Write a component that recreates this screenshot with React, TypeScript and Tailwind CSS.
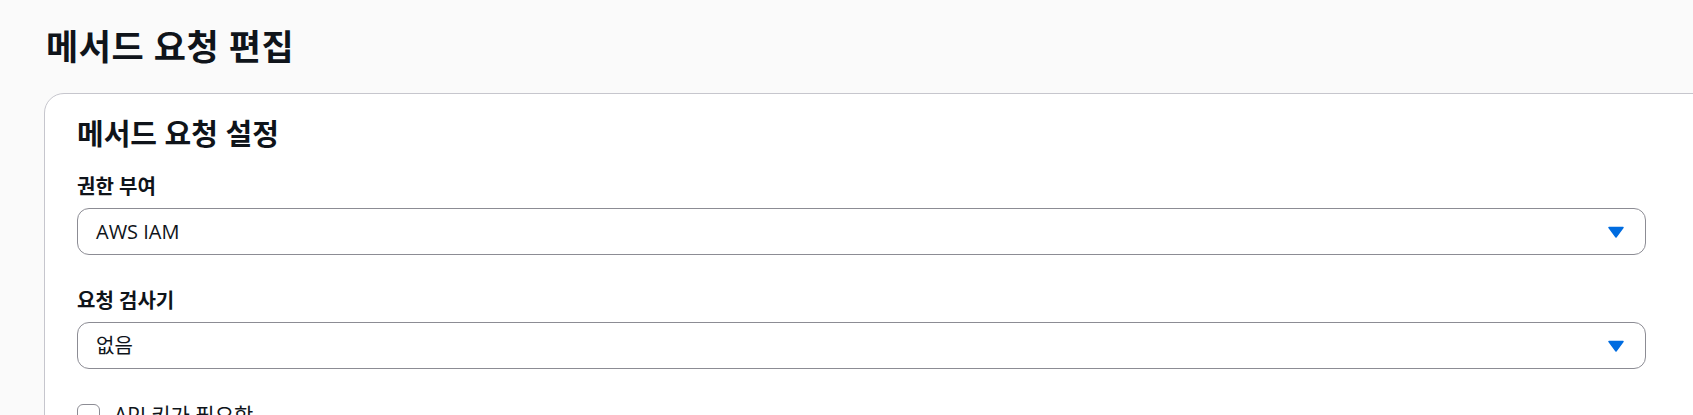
const FONT = "font-['Open_Sans','Noto_Sans_CJK_KR',sans-serif]";

function CaretDown() {
    return (
        <svg width="16" height="12" viewBox="0 0 16 12" className="shrink-0">
            <path d="M1 1.5 H15 L8 11 Z" fill="#006ce0" stroke="#006ce0" strokeWidth="1.5" strokeLinejoin="round" />
        </svg>
    );
}

type SelectFieldProps = {
    label: string;
    value: string;
};

function SelectField(props: SelectFieldProps) {
    return (
        <div className="flex flex-col">
            <div className="text-[20px] leading-[28px] font-bold text-[#0f141a]">{props.label}</div>
            <div className="mt-[7px] w-[1569px] h-[47px] border border-[#8c8c94] rounded-[12px] bg-white flex items-center justify-between pl-[18px] pr-[21px]">
                <span className="text-[20px] text-[#0f141a]">{props.value}</span>
                <CaretDown />
            </div>
        </div>
    );
}

export default function App() {
    return (
        <div className={`min-h-screen h-[415px] overflow-hidden bg-[#fafafa] text-[#0f141a] ${FONT}`}>
            {/* Page header */}
            <div className="pl-[46px] pt-[24px]">
                <h1 className="text-[35px] leading-[46px] font-bold tracking-[0.5px]">메서드 요청 편집</h1>
            </div>

            {/* Container */}
            <div className="ml-[44px] mt-[23px] -mr-[60px] bg-white border border-[#c6c6cd] rounded-[20px] pl-[32px] pt-[21px] pb-10">
                <h2 className="text-[29px] leading-[38px] font-bold">메서드 요청 설정</h2>
                <div className="mt-[20px] flex flex-col gap-[32px]">
                    <SelectField label="권한 부여" value="AWS IAM" />
                    <SelectField label="요청 검사기" value="없음" />
                </div>
                <label className="mt-[31px] flex items-center gap-[14px]">
                    <span className="w-[23px] h-[23px] border border-[#8c8c94] rounded-[6px] bg-white" />
                    <span className="text-[21px]">API 키가 필요함</span>
                </label>
            </div>
        </div>
    );
}
